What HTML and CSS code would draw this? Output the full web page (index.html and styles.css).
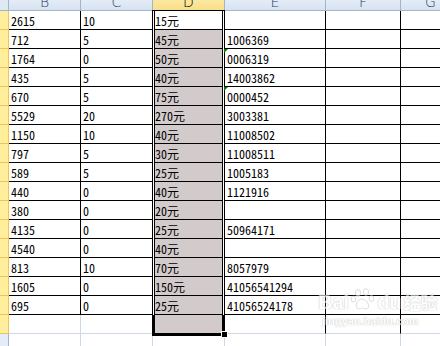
FILE: index.html
```html
<!DOCTYPE html>
<html>
<head>
<meta charset="utf-8">
<link rel="stylesheet" href="styles.css">
</head>
<body>
<div class="sheet">
  <div class="grid">
    <div class="corner"></div>
    <div class="ch">B</div>
    <div class="ch">C</div>
    <div class="ch ch-sel">D</div>
    <div class="ch">E</div>
    <div class="ch">F</div>
    <div class="ch">G</div>

    <div class="rh"></div><div class="c">2615</div><div class="c">10</div><div class="c act">15元</div><div class="c"></div><div class="c"></div><div class="c"></div>
    <div class="rh"></div><div class="c">712</div><div class="c">5</div><div class="c sel">45元</div><div class="c">1006369</div><div class="c"></div><div class="c"></div>
    <div class="rh"></div><div class="c">1764</div><div class="c">0</div><div class="c sel">50元</div><div class="c err">0006319</div><div class="c"></div><div class="c"></div>
    <div class="rh"></div><div class="c">435</div><div class="c">5</div><div class="c sel">40元</div><div class="c">14003862</div><div class="c"></div><div class="c"></div>
    <div class="rh"></div><div class="c">670</div><div class="c">5</div><div class="c sel">75元</div><div class="c err">0000452</div><div class="c"></div><div class="c"></div>
    <div class="rh"></div><div class="c">5529</div><div class="c">20</div><div class="c sel">270元</div><div class="c">3003381</div><div class="c"></div><div class="c"></div>
    <div class="rh"></div><div class="c">1150</div><div class="c">10</div><div class="c sel">40元</div><div class="c">11008502</div><div class="c"></div><div class="c"></div>
    <div class="rh"></div><div class="c">797</div><div class="c">5</div><div class="c sel">30元</div><div class="c">11008511</div><div class="c"></div><div class="c"></div>
    <div class="rh"></div><div class="c">589</div><div class="c">5</div><div class="c sel">25元</div><div class="c">1005183</div><div class="c"></div><div class="c"></div>
    <div class="rh"></div><div class="c">440</div><div class="c">0</div><div class="c sel">40元</div><div class="c">1121916</div><div class="c"></div><div class="c"></div>
    <div class="rh"></div><div class="c">380</div><div class="c">0</div><div class="c sel">20元</div><div class="c"></div><div class="c"></div><div class="c"></div>
    <div class="rh"></div><div class="c">4135</div><div class="c">0</div><div class="c sel">25元</div><div class="c">50964171</div><div class="c"></div><div class="c"></div>
    <div class="rh"></div><div class="c">4540</div><div class="c">0</div><div class="c sel">40元</div><div class="c"></div><div class="c"></div><div class="c"></div>
    <div class="rh"></div><div class="c">813</div><div class="c">10</div><div class="c sel">70元</div><div class="c">8057979</div><div class="c"></div><div class="c"></div>
    <div class="rh"></div><div class="c">1605</div><div class="c">0</div><div class="c sel">150元</div><div class="c">41056541294</div><div class="c"></div><div class="c"></div>
    <div class="rh"></div><div class="c">695</div><div class="c">0</div><div class="c sel">25元</div><div class="c">41056524178</div><div class="c"></div><div class="c"></div>

    <div class="rh"></div><div class="c g"></div><div class="c g"></div><div class="c g sel"></div><div class="c gb"></div><div class="c gb"></div><div class="c gb"></div>

    <div class="rh rh-off"></div><div class="c g"></div><div class="c g"></div><div class="c g"></div><div class="c g"></div><div class="c g"></div><div class="c g"></div>
  </div>

  <div class="selbox"><div class="selgap"></div></div>
  <div class="handle"></div>

  <div class="mark">
    <div class="mark-top">
      <span>Bai</span>
      <svg class="paw" width="26" height="24" viewBox="0 0 26 24">
        <g fill="#fff" stroke="#c8c8c8" stroke-width="1">
          <ellipse cx="8" cy="5" rx="2.6" ry="3.4"/>
          <ellipse cx="16" cy="4" rx="2.6" ry="3.4"/>
          <ellipse cx="3.5" cy="11" rx="2.4" ry="3"/>
          <ellipse cx="21.5" cy="10.5" rx="2.4" ry="3"/>
          <path d="M12 11 C7 11 5 18 7 20 C9 22 11 20 12.5 20 C14 20 16 22 18 20 C20 18 17 11 12 11 Z"/>
        </g>
      </svg>
      <span>du</span>
      <span class="mark-cn">经验</span>
    </div>
    <div class="mark-url">jingyan.baidu.com</div>
  </div>
</div>
</body>
</html>
```

FILE: styles.css
```css
html, body {
  margin: 0;
  padding: 0;
  background: #fff;
}

.sheet {
  position: relative;
  width: 440px;
  height: 346px;
  overflow: hidden;
  font-family: "Noto Sans CJK SC", "Liberation Sans", sans-serif;
  font-feature-settings: "hwid" 1;
  font-size: 12px;
  color: #000;
}

.grid {
  display: grid;
  grid-template-columns: 9px 72px 72px 72px 101px 75px 60px;
  grid-template-rows: 11px repeat(17, 19px) 20px;
}

.corner {
  box-sizing: border-box;
  background: #dfe8f3;
  border-right: 1px solid #9eb6ce;
  border-bottom: 1px solid #9eb6ce;
}

.ch {
  box-sizing: border-box;
  display: flex;
  align-items: flex-end;
  justify-content: center;
  overflow: hidden;
  font-size: 14px;
  line-height: 15px;
  font-feature-settings: normal;
  font-family: "DejaVu Sans", sans-serif;
  font-weight: 300;
  color: #27415f;
  background: linear-gradient(#e4ecf7, #d7e2f0);
  border-right: 1px solid #9eb6ce;
  border-bottom: 1px solid #9eb6ce;
}

.ch-sel {
  background: linear-gradient(#fbe8a0, #f9df8a);
  border-bottom-color: #f2c35b;
  color: #000;
}

.rh {
  box-sizing: border-box;
  background: #ffef9c;
  border-right: 1px solid #f2c35b;
  border-bottom: 1px solid #f2c35b;
}

.rh-off {
  background: #e4ecf7;
  border-right-color: #9eb6ce;
  border-bottom-color: #9eb6ce;
}

.c {
  position: relative;
  box-sizing: border-box;
  display: flex;
  align-items: flex-end;
  padding: 0 0 1px 2px;
  line-height: 14px;
  white-space: nowrap;
  overflow: visible;
  border-right: 1px solid #000;
  border-bottom: 1px solid #000;
}

.g {
  border-right-color: #d0d7e5;
  border-bottom-color: #d0d7e5;
}

.gb {
  border-bottom-color: #d0d7e5;
}

.sel {
  background: #d3cbcb;
}

.act {
  background: #fff;
}

.err::before {
  content: "";
  position: absolute;
  left: -1px;
  top: 0;
  width: 0;
  height: 0;
  border-top: 4px solid #008000;
  border-right: 4px solid transparent;
  z-index: 3;
}

.selbox {
  position: absolute;
  left: 152px;
  top: 10px;
  width: 73px;
  height: 326px;
  box-sizing: border-box;
  border: 3px solid #000;
  border-top-width: 1px;
  z-index: 2;
}

.selgap {
  position: absolute;
  left: -2px;
  top: 0;
  width: 71px;
  height: 304px;
  box-sizing: border-box;
  border-left: 1px solid #fff;
  border-right: 1px solid #fff;
}

.handle {
  position: absolute;
  left: 221px;
  top: 331px;
  width: 5px;
  height: 5px;
  background: #000;
  border: 1px solid #fff;
  z-index: 4;
}

.mark {
  position: absolute;
  left: 318px;
  top: 288px;
  opacity: 0.6;
  z-index: 5;
}

.mark-top {
  display: flex;
  align-items: flex-end;
  font-family: "Liberation Sans", sans-serif;
  font-weight: bold;
  font-size: 20px;
  line-height: 24px;
  color: #fff;
  text-shadow: 0 0 1px #a8a8a8, 0 0 1px #a8a8a8;
}

.paw {
  margin: 0 1px 2px;
}

.mark-cn {
  font-family: "Noto Sans CJK SC", sans-serif;
  font-size: 17px;
  margin-left: 2px;
}

.mark-url {
  font-family: "Liberation Sans", sans-serif;
  font-weight: bold;
  font-size: 11px;
  line-height: 14px;
  padding-left: 4px;
  color: #fff;
  text-shadow: 0 0 1px #a8a8a8, 0 0 1px #a8a8a8;
}
```
